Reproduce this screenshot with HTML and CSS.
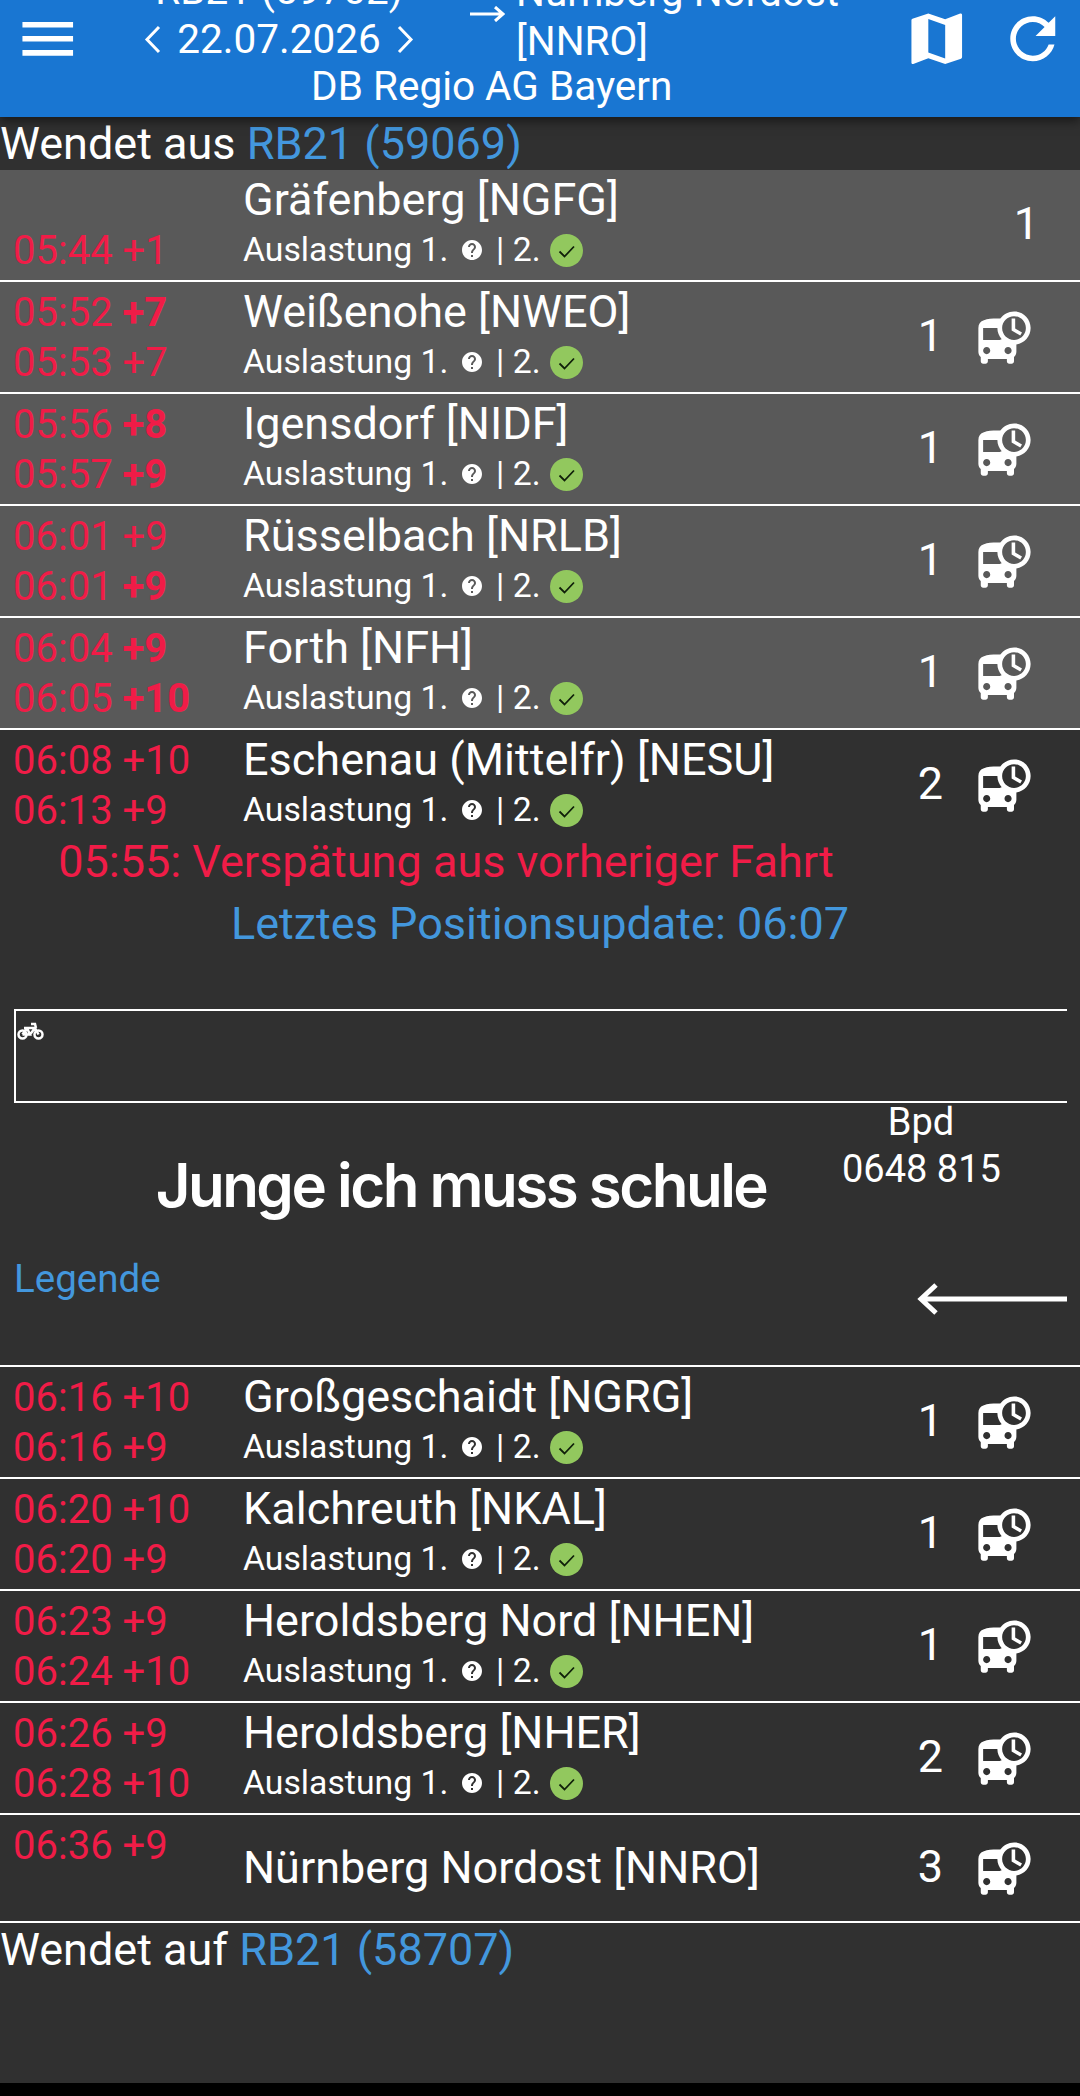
FILE: index.html
```html
<!DOCTYPE html>
<html lang="de">
<head>
  <meta charset="UTF-8" />
  <meta name="viewport" content="width=device-width, initial-scale=1.0" />
  <title>RB21 (59702)</title>
  <link rel="stylesheet" href="styles.css">
</head>
<body>
  <svg class="defs" width="0" height="0" aria-hidden="true">
    <symbol id="i-bus" viewBox="0 0 24 24"><path d="M16 1c-2.4 0-4.52 1.21-5.78 3.05.01-.01.01-.02.02-.03C9.84 4 9.42 4 9 4c-4.42 0-8 .5-8 4v10c0 .88.39 1.67 1 2.22V22c0 .55.45 1 1 1h1c.55 0 1-.45 1-1v-1h8v1c0 .55.45 1 1 1h1c.55 0 1-.45 1-1v-1.78c.61-.55 1-1.34 1-2.22v-3.08c3.39-.49 6-3.39 6-6.92 0-3.87-3.13-7-7-7zM4.5 19c-.83 0-1.5-.67-1.5-1.5S3.67 16 4.5 16s1.5.67 1.5 1.5S5.33 19 4.5 19zM3 13V8h6c0 1.82.7 3.47 1.84 4.72-.03.01-.06.03-.09.05L10 13H3zm10.5 6c-.83 0-1.5-.67-1.5-1.5s.67-1.5 1.5-1.5 1.5.67 1.5 1.5-.67 1.5-1.5 1.5zm2.5-6c-2.76 0-5-2.24-5-5s2.24-5 5-5 5 2.24 5 5-2.24 5-5 5zm.5-9H15v5l3.62 2.16.75-1.23-2.87-1.68V4z"/></symbol>
    <symbol id="i-help" viewBox="0 0 24 24"><path d="M12 2C6.48 2 2 6.48 2 12s4.48 10 10 10 10-4.48 10-10S17.52 2 12 2zm1 17h-2v-2h2v2zm2.07-7.75l-.9.92C13.45 12.9 13 13.5 13 15h-2v-.5c0-1.1.45-2.1 1.17-2.83l1.24-1.26c.37-.36.59-.86.59-1.41 0-1.1-.9-2-2-2s-2 .9-2 2H8c0-2.21 1.79-4 4-4s4 1.79 4 4c0 .88-.36 1.68-.93 2.25z"/></symbol>
    <symbol id="i-ok" viewBox="0 0 33 33"><circle cx="16.5" cy="16.5" r="16.5" fill="#92c85e"/><path d="M9.5 17.5l5 5 9.5-10" fill="none" stroke="#10200a" stroke-width="1.800"/></symbol>
  </svg>

  <header class="topbar">
    <svg class="bar-icon menu-icon" viewBox="0 0 24 24"><path d="M3 18h18v-2H3v2zm0-5h18v-2H3v2zm0-5h18V6H3v2z"/></svg>
    <div class="topbar-mid">
      <div class="topbar-route">
        <div class="train-col">
          <div>RB21 (59702)</div>
          <div class="date-line">
            <svg class="chevron" viewBox="0 0 17 29"><path d="M15 2L3 14.500l12 12.500"/></svg>
            <span>22.07.2026</span>
            <svg class="chevron" viewBox="0 0 17 29"><path d="M2 2l12 12.500L2 27"/></svg>
          </div>
        </div>
        <svg class="route-arrow" viewBox="0 0 35 16"><path d="M0 8h33M25 1l8 7-8 7"/></svg>
        <div class="dest-col">Nürnberg Nordost [NNRO]</div>
      </div>
      <div class="operator">DB Regio AG Bayern</div>
    </div>
    <svg class="bar-icon" viewBox="0 0 24 24"><path d="M20.5 3l-.16.03L15 5.1 9 3 3.36 4.9c-.21.07-.36.25-.36.48V20.5c0 .28.22.5.5.5l.16-.03L9 18.9l6 2.1 5.64-1.9c.21-.07.36-.25.36-.48V3.5c0-.28-.22-.5-.5-.5zM15 19l-6-2.11V5l6 2.11V19z"/></svg>
    <svg class="bar-icon refresh-icon" viewBox="0 0 24 24"><path d="M17.65 6.35C16.2 4.9 14.21 4 12 4c-4.42 0-7.99 3.58-7.99 8s3.57 8 7.99 8c3.73 0 6.84-2.55 7.73-6h-2.08c-.82 2.33-3.04 4-5.65 4-3.31 0-6-2.69-6-6s2.69-6 6-6c1.66 0 3.14.69 4.22 1.78L13 11h7V4l-2.35 2.35z"/></svg>
  </header>

  <main class="content">
    <div class="turn-line">Wendet aus <a href="#">RB21 (59069)</a></div>

    <div class="stop passed">
      <div class="times">
        <div class="time">&nbsp;</div>
        <div class="time">05:44 +1</div>
      </div>
      <div class="stop-info">
        <div class="stop-name">Gräfenberg [NGFG]</div>
        <div class="load">Auslastung 1. <svg class="help"><use href="#i-help"/></svg> | 2. <svg class="ok"><use href="#i-ok"/></svg></div>
      </div>
      <div class="platform">1</div>
    </div>

    <div class="stop passed">
      <div class="times">
        <div class="time">05:52 <b>+7</b></div>
        <div class="time">05:53 +7</div>
      </div>
      <div class="stop-info">
        <div class="stop-name">Weißenohe [NWEO]</div>
        <div class="load">Auslastung 1. <svg class="help"><use href="#i-help"/></svg> | 2. <svg class="ok"><use href="#i-ok"/></svg></div>
      </div>
      <div class="platform">1</div>
      <svg class="bus"><use href="#i-bus"/></svg>
    </div>

    <div class="stop passed">
      <div class="times">
        <div class="time">05:56 <b>+8</b></div>
        <div class="time">05:57 <b>+9</b></div>
      </div>
      <div class="stop-info">
        <div class="stop-name">Igensdorf [NIDF]</div>
        <div class="load">Auslastung 1. <svg class="help"><use href="#i-help"/></svg> | 2. <svg class="ok"><use href="#i-ok"/></svg></div>
      </div>
      <div class="platform">1</div>
      <svg class="bus"><use href="#i-bus"/></svg>
    </div>

    <div class="stop passed">
      <div class="times">
        <div class="time">06:01 +9</div>
        <div class="time">06:01 <b>+9</b></div>
      </div>
      <div class="stop-info">
        <div class="stop-name">Rüsselbach [NRLB]</div>
        <div class="load">Auslastung 1. <svg class="help"><use href="#i-help"/></svg> | 2. <svg class="ok"><use href="#i-ok"/></svg></div>
      </div>
      <div class="platform">1</div>
      <svg class="bus"><use href="#i-bus"/></svg>
    </div>

    <div class="stop passed">
      <div class="times">
        <div class="time">06:04 <b>+9</b></div>
        <div class="time">06:05 <b>+10</b></div>
      </div>
      <div class="stop-info">
        <div class="stop-name">Forth [NFH]</div>
        <div class="load">Auslastung 1. <svg class="help"><use href="#i-help"/></svg> | 2. <svg class="ok"><use href="#i-ok"/></svg></div>
      </div>
      <div class="platform">1</div>
      <svg class="bus"><use href="#i-bus"/></svg>
    </div>

    <div class="stop current">
      <div class="times">
        <div class="time">06:08 +10</div>
        <div class="time">06:13 +9</div>
      </div>
      <div class="stop-info">
        <div class="stop-name">Eschenau (Mittelfr) [NESU]</div>
        <div class="load">Auslastung 1. <svg class="help"><use href="#i-help"/></svg> | 2. <svg class="ok"><use href="#i-ok"/></svg></div>
      </div>
      <div class="platform">2</div>
      <svg class="bus"><use href="#i-bus"/></svg>
    </div>

    <section class="details">
      <div class="delay-note">05:55: Verspätung aus vorheriger Fahrt</div>
      <div class="position-note">Letztes Positionsupdate: 06:07</div>
      <div class="wagons">
        <svg class="bike" viewBox="0 0 27 18"><circle cx="5.500" cy="12.500" r="4"/><circle cx="21.500" cy="12.500" r="4"/><path d="M5.500 12.500L10 6h8l3.500 6.500M10 6l3 6.500H5.500M13 12.500L18 6M14 2h4l1 4M7 6h6"/></svg>
      </div>
      <div class="vehicle-row">
        <div class="vehicle-name">Junge ich muss schule</div>
        <div class="vehicle-no">Bpd<br>0648 815</div>
      </div>
      <div class="legend-row">
        <a href="#">Legende</a>
        <svg class="direction" viewBox="0 0 150 34"><path d="M150 17H4M19 3L4 17l15 14"/></svg>
      </div>
    </section>

    <div class="stop">
      <div class="times">
        <div class="time">06:16 +10</div>
        <div class="time">06:16 +9</div>
      </div>
      <div class="stop-info">
        <div class="stop-name">Großgeschaidt [NGRG]</div>
        <div class="load">Auslastung 1. <svg class="help"><use href="#i-help"/></svg> | 2. <svg class="ok"><use href="#i-ok"/></svg></div>
      </div>
      <div class="platform">1</div>
      <svg class="bus"><use href="#i-bus"/></svg>
    </div>

    <div class="stop">
      <div class="times">
        <div class="time">06:20 +10</div>
        <div class="time">06:20 +9</div>
      </div>
      <div class="stop-info">
        <div class="stop-name">Kalchreuth [NKAL]</div>
        <div class="load">Auslastung 1. <svg class="help"><use href="#i-help"/></svg> | 2. <svg class="ok"><use href="#i-ok"/></svg></div>
      </div>
      <div class="platform">1</div>
      <svg class="bus"><use href="#i-bus"/></svg>
    </div>

    <div class="stop">
      <div class="times">
        <div class="time">06:23 +9</div>
        <div class="time">06:24 +10</div>
      </div>
      <div class="stop-info">
        <div class="stop-name">Heroldsberg Nord [NHEN]</div>
        <div class="load">Auslastung 1. <svg class="help"><use href="#i-help"/></svg> | 2. <svg class="ok"><use href="#i-ok"/></svg></div>
      </div>
      <div class="platform">1</div>
      <svg class="bus"><use href="#i-bus"/></svg>
    </div>

    <div class="stop">
      <div class="times">
        <div class="time">06:26 +9</div>
        <div class="time">06:28 +10</div>
      </div>
      <div class="stop-info">
        <div class="stop-name">Heroldsberg [NHER]</div>
        <div class="load">Auslastung 1. <svg class="help"><use href="#i-help"/></svg> | 2. <svg class="ok"><use href="#i-ok"/></svg></div>
      </div>
      <div class="platform">2</div>
      <svg class="bus"><use href="#i-bus"/></svg>
    </div>

    <div class="stop last">
      <div class="times">
        <div class="time">06:36 +9</div>
      </div>
      <div class="stop-info">
        <div class="stop-name">Nürnberg Nordost [NNRO]</div>
      </div>
      <div class="platform">3</div>
      <svg class="bus"><use href="#i-bus"/></svg>
    </div>

    <div class="turn-line">Wendet auf <a href="#">RB21 (58707)</a></div>
  </main>

  <div class="nav-strip"></div>
</body>
</html>
```

FILE: styles.css
```css
* {
  margin: 0;
  padding: 0;
  box-sizing: border-box;
}

html, body {
  height: 2096px;
}

body {
  font-family: Roboto, 'Liberation Sans', sans-serif;
  background: #303030;
  color: #fff;
  display: flex;
  flex-direction: column;
  overflow: hidden;
}

a {
  color: #4397dd;
  text-decoration: none;
}

.defs {
  position: absolute;
}

/* Top bar */
.topbar {
  height: 117px;
  flex: none;
  background: #1976d2;
  display: flex;
  align-items: flex-start;
  overflow: hidden;
  position: relative;
  z-index: 1;
  box-shadow: 0 4px 10px rgba(0, 0, 0, 0.5);
  font-size: 40.5px;
  padding-left: 13.500px;
}

.topbar svg path {
  fill: #fff;
}

.bar-icon {
  width: 67.500px;
  height: 67.500px;
  flex: none;
  margin-top: 5px;
}

.refresh-icon {
  margin-left: 28.500px;
  margin-right: 14px;
}

.topbar-mid {
  flex: 1;
  align-self: flex-end;
  display: flex;
  flex-direction: column;
  line-height: 49px;
  padding-bottom: 6px;
  white-space: nowrap;
}

.topbar-route {
  display: flex;
  align-items: flex-start;
}

.train-col {
  width: 290px;
  text-align: center;
  flex: none;
  margin-left: 53px;
}

.date-line {
  display: flex;
  align-items: center;
  justify-content: center;
  gap: 16px;
}

.topbar svg.chevron path,
.topbar svg.route-arrow path {
  fill: none;
  stroke: #fff;
  stroke-width: 3;
}

.chevron {
  width: 17px;
  height: 29px;
  flex: none;
}

.route-arrow {
  width: 35px;
  height: 16px;
  flex: none;
  margin: 40px 11px 0 46px;
}

.dest-col {
  width: 380px;
  flex: none;
  white-space: normal;
  margin: 2px 0 -2px;
}

.operator {
  text-align: center;
  margin-top: -2px;
}

/* List */
.content {
  flex: 1;
}

.turn-line {
  font-size: 45px;
  line-height: 53px;
}

.stop {
  display: flex;
  align-items: center;
  height: 112px;
  border-bottom: 2px solid #fff;
  padding-right: 47px;
}

.stop.passed {
  background: #595959;
}

.stop.current {
  border-bottom: 0;
  height: 110px;
}

.stop.last {
  height: 108px;
}

.times {
  width: 243px;
  flex: none;
  align-self: flex-start;
  padding: 6px 0 0 13px;
}

.time {
  font-size: 40px;
  line-height: 50px;
  color: #f01c47;
}

.stop-info {
  flex: 1;
}

.stop-name {
  font-size: 45px;
  line-height: 50px;
}

.load {
  font-size: 33.750px;
  line-height: 50px;
  display: flex;
  align-items: center;
  white-space: pre;
}

.help {
  width: 24px;
  height: 24px;
  fill: #fff;
  margin: 0 4px 0 3px;
}

.ok {
  width: 33px;
  height: 33px;
  margin-left: 1px;
}

.platform {
  font-size: 45px;
  flex: none;
  margin-top: -3px;
}

.platform:last-child {
  margin-right: -6px;
}

.bus {
  width: 57px;
  height: 57px;
  fill: #fff;
  flex: none;
  margin-left: 33px;
}

/* Train details between the stops */
.details {
  height: 536px;
  border-bottom: 2px solid #fff;
}

.delay-note,
.position-note {
  font-size: 45px;
  line-height: 62px;
  text-align: center;
}

.delay-note {
  color: #f01c47;
  padding-right: 188px;
  margin-top: -9px;
}

.position-note {
  color: #4397dd;
}

.wagons {
  height: 94px;
  margin: 54px 13px 0 14px;
  border: 2px solid #fff;
  border-right: 0;
  padding-top: 11px;
}

.bike {
  display: block;
  width: 27px;
  height: 18px;
  margin-left: 1px;
}

.bike circle,
.bike path {
  fill: none;
  stroke: #fff;
  stroke-width: 2.500;
}

.vehicle-row {
  display: flex;
  align-items: flex-start;
  margin-top: -4.500px;
}

.vehicle-name {
  flex: 1;
  text-align: center;
  font-family: Inter, Roboto, sans-serif;
  font-weight: 600;
  font-size: 60px;
  letter-spacing: -2.500px;
  padding-left: 80px;
  margin-top: 50px;
}

.vehicle-no {
  width: 158px;
  margin-right: 80px;
  text-align: center;
  font-size: 38px;
  line-height: 47px;
  white-space: nowrap;
}

.legend-row {
  display: flex;
  justify-content: space-between;
  padding: 35px 13px 0 14px;
  font-size: 38.500px;
  line-height: 45px;
}

.direction {
  width: 150px;
  height: 34px;
  margin-top: 26px;
}

.direction path {
  fill: none;
  stroke: #fff;
  stroke-width: 5;
}

.nav-strip {
  height: 13px;
  flex: none;
  background: #000;
}
```
